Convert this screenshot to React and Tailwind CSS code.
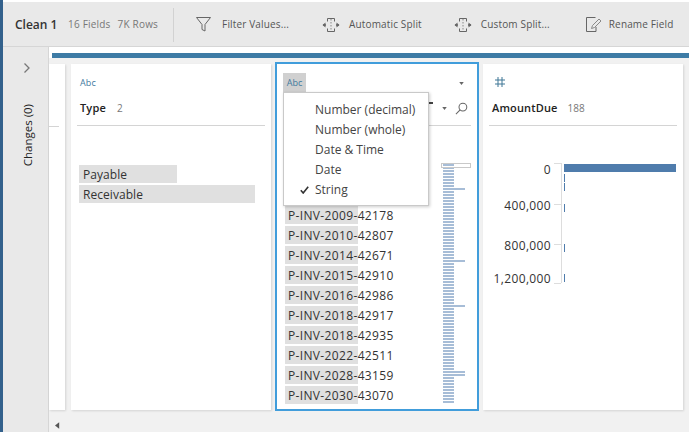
import React from "react";

const font = { fontFamily: '"Open Sans", "Noto Sans", sans-serif' };

function Tool({ icon, label, className = "" }) {
  return (
    <div className={"flex items-center " + className}>
      {icon}
      <span className="text-[10px] text-[#555] tracking-[0.15px] whitespace-nowrap">{label}</span>
    </div>
  );
}

const FilterIcon = (
  <svg width="15" height="15" viewBox="0 0 15 15" fill="none" stroke="#666" strokeWidth="1" className="mr-[11px]">
    <path d="M.5 .5h14L9 7.500v6.500l-3-1.500V7.500z" />
  </svg>
);
const SplitIcon = (
  <svg width="18" height="14" viewBox="0 0 18 14" fill="none" stroke="#666" strokeWidth="1" className="mr-[9px]">
    <path d="M5.500 3.500V.5h7v3M5.500 10.500v3h7v-3" />
    <path d="M9 1v12" strokeDasharray="1.500 1.500" stroke="#888" />
    <path d="M1 7h3M14 7h3" strokeWidth="1.400" />
    <path d="M3.500 4.500 .5 7l3 2.500zM14.500 4.500l3 2.500-3 2.500z" fill="#666" stroke="none" />
  </svg>
);
const RenameIcon = (
  <svg width="16" height="15" viewBox="0 0 16 15" fill="none" stroke="#666" strokeWidth="1" className="mr-[7px]">
    <path d="M9.500 .5H.5v14h9.500V10" />
    <path d="M13 2 15 4 8.500 10.500 5.500 11.500l1-3z" stroke="#888" />
  </svg>
);

const invoices = ["2009-42178","2010-42807","2014-42671","2015-42910","2016-42986","2018-42917","2018-42935","2022-42511","2028-43159","2030-43070"];
const longBars = new Set([8, 32, 47, 69, 70]);
const bars = Array.from({ length: 80 }, (_, i) => i);
const menu = ["Number (decimal)", "Number (whole)", "Date & Time", "Date", "String"];

function Header({ name, count }) {
  return (
    <div className="mx-[6px] h-[62px] border-b border-[#d4d4d4] px-[3px]">
      <div className="h-[37px] pt-[12px] text-[9px] leading-[14px] text-[#3f7a9e] tracking-[0.1px]">Abc</div>
      <div className="flex items-center h-[14px]">
        <span className="text-[11px] font-semibold text-[#222] tracking-[0.15px]">{name}</span>
        <span className="text-[10px] text-[#777] ml-[11px]">{count}</span>
      </div>
    </div>
  );
}

export default function App() {
  return (
    <div className="w-[689px] h-[432px] flex overflow-hidden bg-white" style={font}>
      <div className="w-[3px] bg-[#33618c] shrink-0" />
      <div className="flex-1 flex flex-col pt-[2px] min-w-0">
        <div className="h-[45px] shrink-0 bg-[#e9e9e9] border-b border-[#d6d6d6] flex items-center pl-[12px] pt-[1px]">
          <span className="text-[12px] font-semibold text-[#333] w-[53px] whitespace-nowrap">Clean 1</span>
          <span className="text-[10px] text-[#777] tracking-[0.2px] whitespace-nowrap">16 Fields</span>
          <span className="text-[10px] text-[#777] tracking-[0.2px] whitespace-nowrap ml-[7px]">7K Rows</span>
          <div className="w-px h-[34px] bg-[#d2d2d2] ml-[15px] mr-[22px]" />
          <Tool icon={FilterIcon} label="Filter Values..." />
          <Tool icon={SplitIcon} label="Automatic Split" className="ml-[33px]" />
          <Tool icon={SplitIcon} label="Custom Split..." className="ml-[32px]" />
          <Tool icon={RenameIcon} label="Rename Field" className="ml-[36px]" />
        </div>
        <div className="flex-1 flex min-h-0">
          <div className="w-[46px] shrink-0 bg-[#e9e9e9] border-r border-[#d6d6d6] flex flex-col items-center">
            <svg width="8" height="12" viewBox="0 0 8 12" fill="none" stroke="#777" strokeWidth="1.300" className="mt-[15px] ml-[2px]">
              <path d="M1.500 1.500 6 6l-4.500 4.500" />
            </svg>
            <span className="mt-[30px] ml-[5px] text-[11.5px] text-[#222] [writing-mode:vertical-rl] rotate-180 whitespace-nowrap">Changes (0)</span>
          </div>
          <div className="flex-1 min-w-0 flex flex-col bg-[#f1f1f1]">
            <div className="h-[6px] bg-white shrink-0" />
            <div className="h-[5px] bg-white shrink-0 pl-[3px]"><div className="h-full bg-[#3d7ba5]" /></div>
            <div className="h-[6px] shrink-0" />
            <div className="h-[346px] shrink-0 flex items-stretch">
              <div className="w-[16px] shrink-0 bg-white shadow-[1px_1px_2px_rgba(0,0,0,0.12)] pt-[62px]">
                <div className="w-[10px] border-b border-[#d4d4d4]" />
              </div>
              <div className="w-[200px] ml-[6px] shrink-0 bg-white shadow-[1px_1px_2px_rgba(0,0,0,0.12)]">
                <Header name="Type" count="2" />
                <div className="mt-[39px] ml-[8px] flex flex-col gap-[2px] text-[12px] text-[#333] tracking-[0.05px]">
                  <div className="w-[98px] h-[18px] bg-[#e0e0e0] leading-[20px] pl-[4px]">Payable</div>
                  <div className="w-[176px] h-[18px] bg-[#e0e0e0] leading-[20px] pl-[4px]">Receivable</div>
                </div>
              </div>
              <div className="w-[204px] ml-[4px] shrink-0 h-[349px] -mt-[2px] bg-white border-[2px] border-[#419ddb] relative z-10 flex flex-col">
                <div className="h-[62px] mx-[6px] border-b border-[#d4d4d4] shrink-0">
                  <div className="flex items-start h-[28px] pt-[9px]">
                    <div className="w-[23px] h-[19px] bg-[#d0d0d0] text-[9px] leading-[19px] text-center text-[#3f7a9e]">Abc</div>
                    <svg width="5" height="3" viewBox="0 0 6 4" className="ml-auto mr-[7px] mt-[9px]"><path d="M0 0h6L3 4z" fill="#666" /></svg>
                  </div>
                  <div className="flex items-center justify-end h-[16px] mt-[8px] pr-[3px]">
                    <div className="w-[4px] h-[2px] bg-[#444] mr-[9px] -mt-[10px]" />
                    <svg width="5" height="3" viewBox="0 0 6 4" className="mr-[8px]"><path d="M0 0h6L3 4z" fill="#666" /></svg>
                    <svg width="13" height="13" viewBox="0 0 14 14" fill="none" stroke="#666" strokeWidth="1.100">
                      <circle cx="8.500" cy="5.500" r="4.200" />
                      <path d="M5.500 8.500 1 13" />
                    </svg>
                  </div>
                </div>
                <div className="relative flex-1 flex min-h-0">
                  <div className="pl-[8px] pt-[80px] flex flex-col gap-[2px] w-[166px] shrink-0">
                    {invoices.map((v) => (
                      <div key={v} className="relative h-[18px] text-[12px] leading-[20px] text-[#333] tracking-[0.35px] whitespace-nowrap">
                        <div className="w-[73px] h-[18px] bg-[#e0e0e0]" />
                        <span className="absolute left-[3px] top-0">P-INV-{v}</span>
                      </div>
                    ))}
                  </div>
                  <div className="relative pt-[38px] flex flex-col gap-[1px]">
                    {bars.map((i) => (
                      <div key={i} className={(longBars.has(i) ? "w-[22px]" : "w-[11px]") + " h-[2px] bg-[#a7bdd7] shrink-0"} />
                    ))}
                    <div className="absolute left-[-2px] top-[37px] w-[30px] h-[5px] border border-[#c9c9c9]" />
                  </div>
                </div>
                <div className="absolute left-[6px] top-[28px] w-[146px] h-[114px] bg-white border border-[#c9c9c9] shadow-[1px_1px_3px_rgba(0,0,0,0.2)] pt-[7px] text-[12px] text-[#444]">
                  {menu.map((m) => (
                    <div key={m} className="h-[20px] leading-[20px] pl-[31px] relative whitespace-nowrap">
                      {m === "String" && (
                        <svg width="9" height="8" viewBox="0 0 9 8" fill="none" stroke="#333" strokeWidth="1.600" className="absolute left-[16px] top-[6px]">
                          <path d="M.8 4.200 3.200 7 8.200 .8" />
                        </svg>
                      )}
                      {m}
                    </div>
                  ))}
                </div>
              </div>
              <div className="w-[200px] ml-[4px] shrink-0 bg-white shadow-[1px_1px_2px_rgba(0,0,0,0.12)]">
                <div className="mx-[6px] h-[62px] border-b border-[#d4d4d4] px-[3px]">
                  <div className="h-[37px] pt-[13px] pl-[3px]">
                    <svg width="10" height="10" viewBox="0 0 10 10" fill="none" stroke="#3f7796" strokeWidth="1">
                      <path d="M3 0v10M7 0v10M0 3h10M0 7h10" />
                    </svg>
                  </div>
                  <div className="flex items-center h-[14px]">
                    <span className="text-[11px] font-semibold text-[#222] tracking-[0.15px]">AmountDue</span>
                    <span className="text-[10px] text-[#777] ml-[10px]">188</span>
                  </div>
                </div>
                <svg width="200" height="170" viewBox="0 0 200 170" className="block">
                  <g fontFamily='"Open Sans", sans-serif' fontSize="12" fill="#333" textAnchor="end" letterSpacing="0.35">
                    <text x="68" y="48">0</text>
                    <text x="68" y="84">400,000</text>
                    <text x="68" y="124">800,000</text>
                    <text x="68" y="157">1,200,000</text>
                  </g>
                  <g stroke="#ddd" strokeWidth="1" fill="none">
                    <path d="M78.500 37v120M71 37.500h7M71 78.500h7M71 118.500h7M71 157.500h7" />
                  </g>
                  <rect x="81" y="38" width="112" height="8" fill="#4f7cac" />
                  <g fill="#4f7cac">
                    <rect x="81" y="48" width="1" height="8" />
                    <rect x="81" y="57" width="1" height="8" />
                    <rect x="81" y="78" width="1" height="8" />
                    <rect x="81" y="118" width="1" height="8" />
                    <rect x="81" y="148" width="1" height="8" />
                  </g>
                </svg>
              </div>
            </div>
            <div className="flex-1 pl-[6px] pt-[12px]">
              <svg width="5" height="7" viewBox="0 0 6 8" className="block"><path d="M5 0v8L0 4z" fill="#555" /></svg>
            </div>
          </div>
        </div>
      </div>
    </div>
  );
}
